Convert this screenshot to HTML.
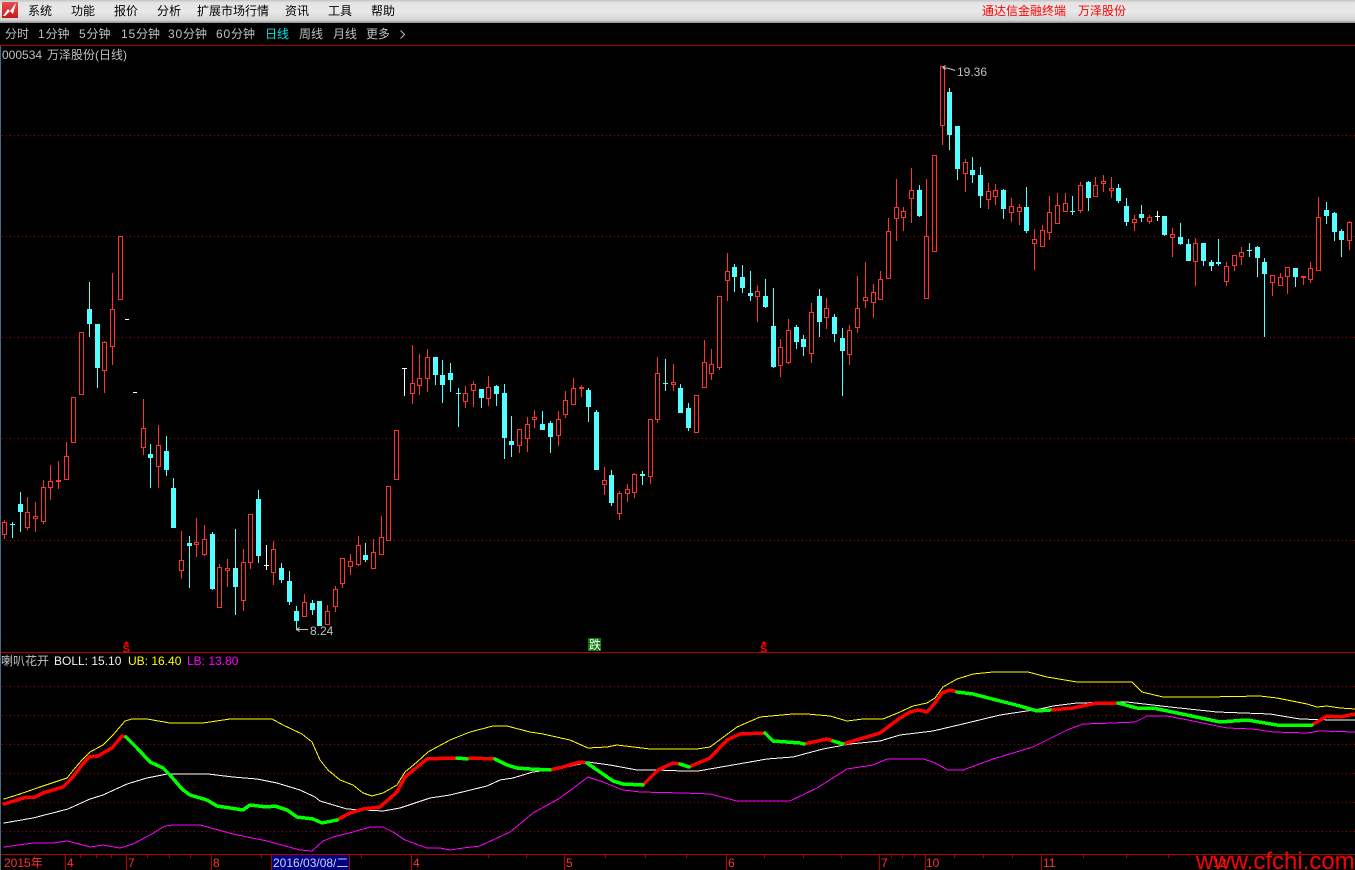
<!DOCTYPE html>
<html>
<head>
<meta charset="utf-8">
<title>通达信金融终端 万泽股份</title>
<style>
html,body{margin:0;padding:0;background:#000;width:1355px;height:870px;overflow:hidden}
svg{display:block}
text{font-family:"Liberation Sans","WenQuanYi Zen Hei","Noto Sans CJK SC",sans-serif;font-size:12px}
.c{font-family:"WenQuanYi Zen Hei","Noto Sans CJK SC",sans-serif;font-size:12px}
.d{letter-spacing:.8px}
</style>
</head>
<body>
<svg width="1355" height="870" viewBox="0 0 1355 870" xmlns="http://www.w3.org/2000/svg">
<defs>
<linearGradient id="bar" x1="0" y1="0" x2="0" y2="1">
<stop offset="0" stop-color="#c4c4c4"/><stop offset=".12" stop-color="#e4e4e4"/><stop offset=".5" stop-color="#e8e8e8"/><stop offset=".88" stop-color="#d4d4d4"/><stop offset="1" stop-color="#8c8c8c"/>
</linearGradient>
<linearGradient id="lg" x1="0" y1="0" x2="0" y2="1"><stop offset="0" stop-color="#e85050"/><stop offset="1" stop-color="#c81818"/></linearGradient>
</defs>
<rect width="1355" height="870" fill="#000"/>
<!-- top bar -->
<rect width="1355" height="23" fill="url(#bar)"/>
<rect x="2" y="2" width="16" height="16" fill="url(#lg)"/>
<path d="M3 16l5-7 2 2 6-8-3 11-3-3-5 5z" fill="#fff"/>
<g fill="#000">
<text class="c" x="28" y="15">系统</text>
<text class="c" x="71" y="15">功能</text>
<text class="c" x="114" y="15">报价</text>
<text class="c" x="157" y="15">分析</text>
<text class="c" x="197" y="15">扩展市场行情</text>
<text class="c" x="285" y="15">资讯</text>
<text class="c" x="328" y="15">工具</text>
<text class="c" x="371" y="15">帮助</text>
</g>
<text class="c" x="982" y="15" fill="#f00">通达信金融终端</text>
<text class="c" x="1078" y="15" fill="#f00">万泽股份</text>
<!-- toolbar -->
<g fill="#c0c0c0">
<text x="5" y="38">分时</text>
<text x="38" y="38"><tspan class="d">1</tspan>分钟</text>
<text x="79" y="38"><tspan class="d">5</tspan>分钟</text>
<text x="121" y="38"><tspan class="d">15</tspan>分钟</text>
<text x="168" y="38"><tspan class="d">30</tspan>分钟</text>
<text x="216" y="38"><tspan class="d">60</tspan>分钟</text>
<text x="265" y="38" fill="#00e0e8">日线</text>
<text x="299" y="38">周线</text>
<text x="333" y="38">月线</text>
<text x="366" y="38">更多</text>
</g>
<path d="M400.500 30.500l4 4-4 4" fill="none" stroke="#c0c0c0"/>
<path d="M0 45.500H1355" stroke="#a00000"/>
<text x="2" y="59" fill="#c0c0c0">000534</text>
<text x="47" y="59" fill="#c0c0c0">万泽股份(日线)</text>
<rect x="0" y="46" width="1" height="824" fill="#50687f"/>

<!-- grid -->
<g stroke="#a80000" stroke-dasharray="1 3" fill="none" shape-rendering="crispEdges">
<path d="M2 135.500H1355M2 236.500H1355M2 337.500H1355M2 438.500H1355M2 540.500H1355"/>
<path d="M2 686.500H1355M2 715.500H1355M2 744.500H1355M2 773.500H1355M2 802.500H1355M2 831.500H1355"/>
</g>
<path d="M1 652.500H1355M1 854.500H1355" stroke="#b00000" shape-rendering="crispEdges"/>

<!-- candles -->
<g shape-rendering="crispEdges" fill="none">
<path stroke="#ff3232" d="M4.5 520V539M27.5 497V530M35.5 502V532M43.5 480V524M50.5 465V500M58.5 461V489M66.5 442V480M104.5 341V393M112.5 273V365M143.5 399V455M158.5 425V488M181.5 531V579M196.5 518V557M204.5 525V556M219.5 564V608M227.5 559V587M243.5 549V611M250.5 514V569M273.5 541V585M304.5 594V617M327.5 605V625M335.5 586V612M342.5 558V588M350.5 554V575M358.5 536V566M373.5 539V569M381.5 516V555M412.5 345V404M419.5 354V395M427.5 349V392M465.5 386V408M473.5 381V407M488.5 376V406M519.5 429V453M527.5 417V452M534.5 410V428M558.5 411V446M565.5 391V418M573.5 378V405M581.5 385V397M604.5 467V495M619.5 491V520M627.5 484V502M634.5 473V498M650.5 419V484M657.5 357V423M673.5 364V391M704.5 340V388M711.5 349V380M719.5 296V370M727.5 253V301M757.5 285V322M780.5 339V377M788.5 319V364M811.5 303V363M826.5 298V329M849.5 325V365M857.5 276V333M865.5 262V308M873.5 284V318M880.5 271V300M888.5 218V279M896.5 179V241M903.5 207V231M911.5 168V223M926.5 179V299M942.5 66V145M965.5 159V192M988.5 183V209M995.5 184V205M1011.5 198V222M1019.5 204V225M1034.5 229V270M1042.5 225V247M1049.5 196V240M1057.5 193V224M1065.5 193V212M1080.5 182V213M1095.5 177V197M1103.5 175V192M1111.5 177V198M1134.5 215V231M1149.5 215V224M1172.5 228V257M1195.5 238V286M1226.5 262V286M1234.5 255V271M1241.5 247V265M1272.5 275V296M1280.5 273V286M1287.5 267V294M1303.5 276V285M1310.5 262V283M1318.5 197V271M1349.5 221V250"/>
<path stroke="#ff3232" fill="#000" d="M2.5 522.5h4V534.5h-4zM25.5 512.5h4V527.5h-4zM33.5 516.5h4V518.5h-4zM41.5 487.5h4V521.5h-4zM48.5 481.5h4V487.5h-4zM56.5 480.5h4V481.5h-4zM64.5 456.5h4V479.5h-4zM71.5 397.5h4V442.5h-4zM79.5 332.5h4V394.5h-4zM102.5 342.5h4V370.5h-4zM110.5 309.5h4V346.5h-4zM118.5 236.5h4V299.5h-4zM141.5 428.5h4V447.5h-4zM156.5 445.5h4V466.5h-4zM179.5 560.5h4V570.5h-4zM194.5 542.5h4V544.5h-4zM202.5 539.5h4V554.5h-4zM217.5 567.5h4V607.5h-4zM225.5 568.5h4V570.5h-4zM241.5 562.5h4V600.5h-4zM248.5 514.5h4V562.5h-4zM271.5 549.5h4V572.5h-4zM302.5 602.5h4V616.5h-4zM325.5 611.5h4V624.5h-4zM333.5 589.5h4V606.5h-4zM340.5 558.5h4V583.5h-4zM348.5 561.5h4V566.5h-4zM356.5 545.5h4V564.5h-4zM371.5 552.5h4V568.5h-4zM379.5 537.5h4V554.5h-4zM386.5 486.5h4V540.5h-4zM394.5 430.5h4V479.5h-4zM410.5 383.5h4V393.5h-4zM417.5 378.5h4V385.5h-4zM425.5 357.5h4V378.5h-4zM463.5 393.5h4V401.5h-4zM471.5 384.5h4V390.5h-4zM486.5 387.5h4V398.5h-4zM517.5 429.5h4V445.5h-4zM525.5 424.5h4V438.5h-4zM532.5 417.5h4V419.5h-4zM556.5 419.5h4V435.5h-4zM563.5 400.5h4V414.5h-4zM571.5 388.5h4V404.5h-4zM579.5 387.5h4V388.5h-4zM602.5 480.5h4V484.5h-4zM617.5 493.5h4V513.5h-4zM625.5 489.5h4V493.5h-4zM632.5 474.5h4V492.5h-4zM648.5 419.5h4V476.5h-4zM655.5 373.5h4V419.5h-4zM671.5 382.5h4V384.5h-4zM694.5 395.5h4V432.5h-4zM702.5 362.5h4V387.5h-4zM709.5 364.5h4V373.5h-4zM717.5 296.5h4V367.5h-4zM725.5 271.5h4V280.5h-4zM755.5 291.5h4V296.5h-4zM778.5 347.5h4V365.5h-4zM786.5 330.5h4V362.5h-4zM809.5 312.5h4V353.5h-4zM824.5 308.5h4V317.5h-4zM847.5 330.5h4V354.5h-4zM855.5 308.5h4V327.5h-4zM863.5 297.5h4V300.5h-4zM871.5 292.5h4V302.5h-4zM878.5 279.5h4V299.5h-4zM886.5 231.5h4V278.5h-4zM894.5 207.5h4V218.5h-4zM901.5 211.5h4V217.5h-4zM909.5 190.5h4V198.5h-4zM924.5 236.5h4V298.5h-4zM932.5 155.5h4V251.5h-4zM940.5 66.5h4V125.5h-4zM963.5 162.5h4V173.5h-4zM986.5 191.5h4V199.5h-4zM993.5 190.5h4V196.5h-4zM1009.5 206.5h4V212.5h-4zM1017.5 207.5h4V211.5h-4zM1032.5 239.5h4V243.5h-4zM1040.5 230.5h4V246.5h-4zM1047.5 212.5h4V232.5h-4zM1055.5 205.5h4V223.5h-4zM1063.5 203.5h4V211.5h-4zM1078.5 185.5h4V210.5h-4zM1093.5 185.5h4V196.5h-4zM1101.5 181.5h4V183.5h-4zM1109.5 188.5h4V190.5h-4zM1132.5 219.5h4V222.5h-4zM1147.5 217.5h4V221.5h-4zM1170.5 234.5h4V237.5h-4zM1193.5 243.5h4V261.5h-4zM1224.5 266.5h4V281.5h-4zM1232.5 255.5h4V265.5h-4zM1239.5 252.5h4V256.5h-4zM1270.5 275.5h4V282.5h-4zM1278.5 277.5h4V285.5h-4zM1285.5 267.5h4V276.5h-4zM1301.5 276.5h4V277.5h-4zM1308.5 268.5h4V279.5h-4zM1316.5 217.5h4V270.5h-4zM1347.5 222.5h4V240.5h-4z"/>
<path stroke="#54ffff" d="M12.5 522V538M20.5 492V532M89.5 282V337M97.5 324V388M150.5 444V488M166.5 436V476M173.5 478V528M189.5 536V588M212.5 532V590M235.5 529V615M258.5 490V563M281.5 563V583M289.5 571V605M296.5 606V629M312.5 600V615M319.5 601V626M365.5 543V562M435.5 357V385M442.5 360V403M450.5 363V392M458.5 388V427M481.5 389V408M496.5 385V406M504.5 384V459M511.5 416V457M542.5 411V430M550.5 421V453M588.5 388V422M596.5 410V470M611.5 470V506M642.5 471V485M665.5 359V391M680.5 384V413M688.5 403V431M734.5 264V292M742.5 265V293M750.5 271V301M765.5 279V308M773.5 288V368M796.5 325V349M803.5 335V356M819.5 289V337M834.5 314V342M842.5 328V396M919.5 185V217M949.5 88V150M957.5 126V180M972.5 157V183M980.5 167V208M1003.5 189V219M1026.5 187V233M1072.5 196V215M1088.5 181V211M1118.5 184V203M1126.5 198V226M1141.5 205V222M1164.5 216V236M1180.5 223V245M1188.5 239V261M1203.5 243V266M1211.5 260V271M1218.5 239V266M1249.5 243V257M1257.5 246V277M1264.5 258V337M1295.5 268V287M1326.5 202V224M1334.5 212V241M1341.5 229V257"/>
<path fill="#54ffff" d="M10 524h5V525h-5zM18 504h5V512h-5zM87 309h5V324h-5zM95 324h5V368h-5zM148 454h5V458h-5zM164 451h5V470h-5zM171 488h5V528h-5zM187 543h5V546h-5zM210 534h5V589h-5zM233 568h5V587h-5zM256 499h5V556h-5zM279 568h5V580h-5zM287 581h5V602h-5zM294 611h5V621h-5zM310 603h5V610h-5zM317 601h5V626h-5zM363 555h5V560h-5zM433 357h5V375h-5zM440 375h5V385h-5zM448 373h5V380h-5zM456 393h5V394h-5zM479 389h5V398h-5zM494 386h5V394h-5zM502 393h5V438h-5zM509 441h5V445h-5zM540 424h5V430h-5zM548 423h5V437h-5zM586 390h5V407h-5zM594 412h5V470h-5zM609 475h5V503h-5zM640 474h5V476h-5zM663 383h5V384h-5zM678 388h5V413h-5zM686 408h5V428h-5zM732 267h5V277h-5zM740 277h5V288h-5zM748 293h5V296h-5zM763 296h5V307h-5zM771 326h5V367h-5zM794 327h5V342h-5zM801 339h5V347h-5zM817 296h5V322h-5zM832 317h5V334h-5zM840 338h5V351h-5zM917 190h5V216h-5zM947 92h5V135h-5zM955 126h5V169h-5zM970 170h5V175h-5zM978 175h5V196h-5zM1001 190h5V209h-5zM1024 207h5V231h-5zM1070 211h5V212h-5zM1086 182h5V198h-5zM1116 188h5V201h-5zM1124 206h5V222h-5zM1139 214h5V218h-5zM1162 216h5V235h-5zM1178 237h5V244h-5zM1186 244h5V261h-5zM1201 243h5V261h-5zM1209 262h5V266h-5zM1216 262h5V264h-5zM1247 250h5V251h-5zM1255 247h5V258h-5zM1262 262h5V274h-5zM1293 268h5V277h-5zM1324 210h5V216h-5zM1332 213h5V232h-5zM1339 231h5V240h-5z"/>
<path stroke="#fff" d="M125 319.500h4M133 392.500h4M266.500 545V570M264 565.500h5M404.500 368V396M402 368.500h5M1157.500 211V221M1155 216.500h5"/>
</g>

<!-- price labels -->
<g fill="none" stroke="#c0c0c0" shape-rendering="crispEdges">
<path d="M296 629.500h12M296.500 629.500l3-2M296.500 629.500l3 2"/>
<path d="M942.500 67.500l3-2M942.500 67.500l3 2M943 67.500l6 1 6 2"/>
</g>
<text x="310" y="635" fill="#c0c0c0">8.24</text>
<text x="957" y="76" fill="#c0c0c0">19.36</text>

<!-- markers -->
<path d="M123.500 644.500h6l-3-3.500z" fill="#f00"/>
<text x="122.500" y="652.500" fill="#f00" style="font-size:11px;font-weight:bold">S</text>
<path d="M761 644.500h6l-3-3.500z" fill="#f00"/>
<text x="760" y="652.500" fill="#f00" style="font-size:11px;font-weight:bold">S</text>
<rect x="588" y="638" width="13" height="13" fill="#0a7a0a"/>
<text class="c" x="589" y="649" fill="#fff">跌</text>

<!-- indicator title -->
<text x="1" y="665" fill="#c0c0c0">喇叭花开</text>
<text x="54" y="665" fill="#f0f0f0">BOLL: 15.10</text>
<text x="128" y="665" fill="#ff0">UB: 16.40</text>
<text x="187" y="665" fill="#f0f">LB: 13.80</text>

<!-- BOLL lines -->
<g fill="none" shape-rendering="crispEdges" stroke-linejoin="round" stroke-linecap="round">
<polyline stroke="#ffff00" points="4,799 20,794 40,787 67,778 75,768 82,760 90,752 103,745 113,735 125,721 132,719 147,719 170,723 203,723 230,719 272,719 283,725 302,734 312,742 320,760 328,770 340,780 353,785 363,793 372,796 383,793 397,785 405,772 417,762 428,752 450,740 470,732 493,726 507,726 530,732 543,734 570,740 588,748 607,747 617,745 650,749 683,749 697,749 710,747 737,727 760,717 793,714 807,714 830,716 847,721 863,719 883,719 900,712 913,706 927,703 935,698 943,687 957,679 973,674 993,672 1028,672 1047,677 1077,682 1132,682 1142,692 1163,697 1207,697 1260,696 1277,698 1307,704 1317,707 1327,706 1340,708 1355,709"/>
<polyline stroke="#ffffff" points="4,823 33,818 68,809 90,799 103,795 127,784 147,778 167,774 208,774 233,777 257,779 277,783 300,790 315,797 320,801 347,809 383,811 400,808 430,798 450,795 487,786 500,780 513,778 533,772 563,768 588,762 610,765 637,770 657,770 683,771 698,771 727,766 767,759 793,757 823,749 850,744 880,741 900,735 933,731 967,723 1000,715 1040,709 1053,706 1077,703 1127,702 1170,707 1217,712 1270,714 1300,719 1333,720 1355,720"/>
<polyline stroke="#ff00ff" points="4,847 33,843 53,843 67,841 75,843 90,847 103,845 120,848 133,844 150,835 165,826 173,825 200,825 233,834 267,841 300,850 312,851 323,841 333,837 353,832 370,827 383,827 393,832 405,840 427,848 440,848 450,850 463,848 480,846 510,832 533,813 560,798 588,777 603,782 623,790 640,792 683,793 710,794 737,801 790,801 817,788 847,769 873,765 887,759 900,759 923,759 933,762 948,770 963,770 993,759 1033,747 1067,730 1083,724 1113,723 1135,722 1147,716 1167,716 1193,721 1227,728 1253,729 1273,732 1307,733 1320,731 1355,732"/>
<g stroke="#ff0000" stroke-width="3.5">
<polyline points="4,804 17,800 27,797 35,797 43,793 63,787 72,778 82,765 89,757 98,756 112,748 122,736 126,737"/>
<polyline points="337,820 350,813 363,809 380,807 397,792 405,777 427,759 450,758 457,758"/>
<polyline points="467,759 470,758 495,759"/>
<polyline points="550,770 563,767 580,762 587,763"/>
<polyline points="643,785 658,770 673,763 680,764"/>
<polyline points="689,767 710,758 727,740 740,734 765,733"/>
<polyline points="804,744 827,739 833,741"/>
<polyline points="843,744 880,733 900,718 910,712 918,710 927,712 935,703 942,693 950,690 957,692"/>
<polyline points="1050,710 1073,708 1097,703 1113,703 1118,703"/>
<polyline points="1312,725 1327,716 1340,717 1355,714"/>
</g>
<g stroke="#00ff00" stroke-width="3.5">
<polyline points="126,737 137,748 150,762 163,768 170,775 182,789 190,795 207,800 217,806 230,808 243,810 250,805 267,807 275,806 287,810 297,817 313,819 322,823 337,820"/>
<polyline points="457,758 467,759"/>
<polyline points="495,759 507,765 517,768 530,769 550,770"/>
<polyline points="587,763 613,781 623,784 643,785"/>
<polyline points="680,764 689,767"/>
<polyline points="765,733 773,741 800,743 804,744"/>
<polyline points="833,741 843,744"/>
<polyline points="957,692 973,694 1000,701 1020,706 1037,711 1050,710"/>
<polyline points="1118,703 1137,708 1153,708 1187,715 1220,722 1247,720 1277,725 1312,725"/>
</g>
</g>

<!-- axis -->
<rect x="272" y="855" width="77" height="15" fill="#000080"/>
<g stroke="#b00000" shape-rendering="crispEdges">
<path d="M65.500 855V870M126.500 855V870M211.500 855V870M271.500 855V870M349.500 855V870M411.500 855V870M564.500 855V870M726.500 855V870M879.500 855V870M925.500 855V870M1041.500 855V870"/>
<path d="M80.500 855v3M96.500 855v3M111.500 855v3M147.500 855v3M169.500 855v3M190.500 855v3M261.500 855v3M361.500 855v3M488.500 855v3M526.500 855v3M605.500 855v3M645.500 855v3M686.500 855v3M764.500 855v3M803.500 855v3M841.500 855v3M891.500 855v3M902.500 855v3M914.500 855v3M954.500 855v3M983.500 855v3M1012.500 855v3M1083.500 855v3M1126.500 855v3M1168.500 855v3"/>
</g>
<g fill="#ff3232">
<text x="4" y="867">2015年</text>
<text x="67" y="867">4</text>
<text x="128" y="867">7</text>
<text x="213" y="867">8</text>
<text x="413" y="867">4</text>
<text x="566" y="867">5</text>
<text x="728" y="867">6</text>
<text x="881" y="867">7</text>
<text x="926" y="867">10</text>
<text x="1043" y="867">11</text>
<text x="1213" y="867">12</text>
</g>
<text x="273" y="867" fill="#c8d0ff">2016/03/08/二</text>
<text x="1196" y="869" fill="#f00" style="font-size:24px">www.cfchi.com</text>
</svg>
</body>
</html>
